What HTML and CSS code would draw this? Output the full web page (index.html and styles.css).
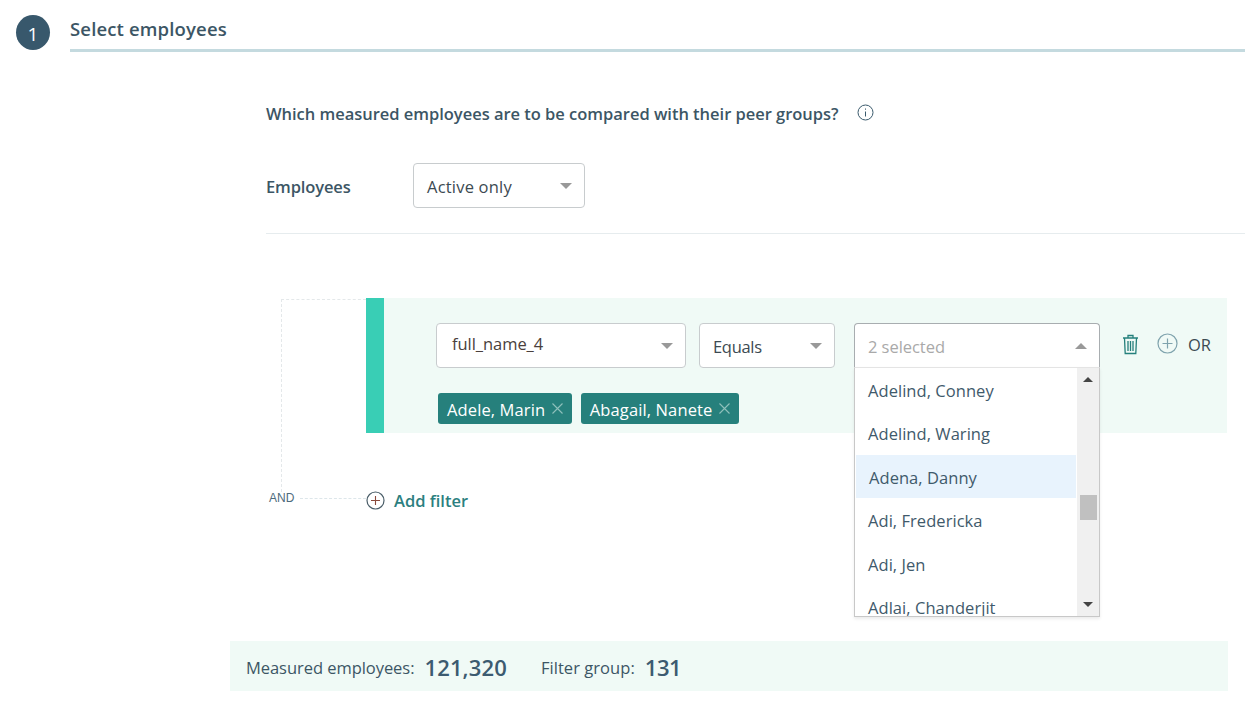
FILE: index.html
```html
<!DOCTYPE html>
<html lang="en">
<head>
<meta charset="utf-8">
<title>Select employees</title>
<link rel="stylesheet" href="styles.css">
</head>
<body>
<header class="step">
  <div class="step-num">1</div>
  <h1 class="step-title">Select employees</h1>
</header>
<section class="intro">
  <div class="question">
    <span>Which measured employees are to be compared with their peer groups?</span>
    <svg class="info" viewBox="0 0 17 17" width="17" height="17"><circle cx="8.5" cy="8.5" r="7.5" fill="none" stroke="#3a5a6c" stroke-width="1"/><path d="M8.5 7.5v5M8.5 4.500v1.200" stroke="#3a5a6c" stroke-width="1" fill="none"/></svg>
  </div>
  <div class="emp-row">
    <label class="emp-label">Employees</label>
    <div class="select select-active"><span class="txt-active">Active only</span><i class="caret"></i></div>
  </div>
</section>
<section class="filters">
  <div class="tree-v"></div>
  <div class="tree-h-top"></div>
  <div class="tree-h-bot"></div>
  <span class="and">AND</span>
  <div class="panel">
    <div class="panel-bar"></div>
    <div class="panel-body">
      <div class="controls">
        <div class="select select-field"><span class="field-text">full_name_4</span><i class="caret"></i></div>
        <div class="select select-op"><span class="txt-op">Equals</span><i class="caret"></i></div>
        <div class="multi">
          <div class="select select-multi"><span class="placeholder">2 selected</span><i class="caret caret-up"></i></div>
          <div class="dropdown">
            <ul class="options">
              <li>Adelind, Conney</li>
              <li>Adelind, Waring</li>
              <li class="hover">Adena, Danny</li>
              <li>Adi, Fredericka</li>
              <li>Adi, Jen</li>
              <li>Adlai, Chanderjit</li>
            </ul>
            <div class="scrollbar">
              <i class="sb-up"></i>
              <i class="sb-thumb"></i>
              <i class="sb-down"></i>
            </div>
          </div>
        </div>
        <svg class="trash" viewBox="0 0 17 21" width="17" height="21"><path d="M1 4h15M6 4V1.500h5V4M2.500 4l.7 15.500h10.600L14.500 4" fill="none" stroke="#25807c" stroke-width="1.300"/><path d="M6 7v10M8.500 7v10M11 7v10" stroke="#25807c" stroke-width="1.300" fill="none"/></svg>
        <svg class="plus plus-or" viewBox="0 0 21 21" width="21" height="21"><circle cx="10.500" cy="10.500" r="9.500" fill="none" stroke="#7fa3ad" stroke-width="1.200"/><path d="M10.500 5.500v10M5.500 10.500h10" stroke="#7fa3ad" stroke-width="1.200" fill="none"/></svg>
        <span class="or">OR</span>
      </div>
      <div class="tags">
        <span class="tag"><span class="tag-text">Adele, Marin</span><svg viewBox="0 0 11 11" width="11" height="11"><path d="M.5.5l10 10M10.500.5l-10 10" stroke="#8fc0bc" stroke-width="1.100" fill="none"/></svg></span>
        <span class="tag"><span class="tag-text">Abagail, Nanete</span><svg viewBox="0 0 11 11" width="11" height="11"><path d="M.5.5l10 10M10.500.5l-10 10" stroke="#8fc0bc" stroke-width="1.100" fill="none"/></svg></span>
      </div>
    </div>
  </div>
  <div class="add-filter">
    <svg viewBox="0 0 19 19" width="19" height="19"><circle cx="9.500" cy="9.500" r="8.500" fill="none" stroke="#4a5d68" stroke-width="1.200"/><path d="M9.500 5v9M5 9.500h9" stroke="#8a4a3c" stroke-width="1.100" fill="none"/></svg>
    <span class="add-text">Add filter</span>
  </div>
</section>
<footer class="summary">
  <span class="sum-label">Measured employees:</span><strong class="sum-val">121,320</strong>
  <span class="sum-label sum-second">Filter group:</span><strong class="sum-val sum-val-tight">131</strong>
</footer>
</body>
</html>
```
FILE: styles.css
```css
* { box-sizing: border-box; }
html, body { margin: 0; padding: 0; background: #fff; }
body {
  width: 1245px;
  height: 714px;
  overflow: hidden;
  font-family: "Open Sans", "Noto Sans", sans-serif;
  color: #3c5665;
  font-size: 16px;
}
.step { display: flex; padding: 15px 0 0 16px; height: 52px; }
.step-num {
  width: 34px; height: 35px; border-radius: 50%;
  background: #38586c; color: #fff;
  display: flex; align-items: center; justify-content: center;
  font-size: 19px; padding-top: 2px;
}
.step-title {
  flex: 1; margin: 0 0 0 20px; height: 37px;
  border-bottom: 3px solid #c4dadf;
  font-size: 18.500px; font-weight: 600; line-height: 28px;
  letter-spacing: 0.15px; color: #3c5665;
}
.intro { margin-left: 266px; height: 182px; border-bottom: 1px solid #e6ecee; }
.question {
  display: flex; align-items: center; gap: 18px; padding-top: 49px; height: 75px;
  font-size: 16.500px; font-weight: 600; letter-spacing: -0.025px;
}
.question span { line-height: 26px; }
.info { margin-top: -3px; }
.emp-row { display: flex; align-items: center; margin-top: 36px; }
.emp-label { width: 147px; padding-top: 2px; font-size: 16.500px; font-weight: 600; letter-spacing: -0.13px; }
.select {
  position: relative; background: #fff;
  border: 1px solid #c8ccce; border-radius: 4px;
  display: flex; align-items: center;
  font-size: 16.500px; letter-spacing: 0; color: #3c4a52;
}
.select-active { width: 172px; height: 45px; padding: 2px 0 0 13px; }
.txt-active { letter-spacing: 0.2px; }
.txt-op { letter-spacing: -0.3px; }
.caret {
  position: absolute; right: 12.500px; top: 50%; margin-top: -3px;
  width: 0; height: 0;
  border-left: 6.500px solid transparent; border-right: 6.500px solid transparent;
  border-top: 6.500px solid #999;
}
.caret-up { border-top: 0; border-bottom: 6.500px solid #999; }
.filters { position: relative; height: 407px; }
.tree-v { position: absolute; left: 281px; top: 65px; height: 193px; border-left: 1px dashed #e4e8ea; }
.tree-h-top { position: absolute; left: 281px; top: 65px; width: 85px; border-top: 1px dashed #e4e8ea; }
.tree-h-bot { position: absolute; left: 300px; top: 264px; width: 66px; border-top: 1px dashed #dde6ea; }
.and { position: absolute; left: 269px; top: 256px; font-size: 12px; line-height: 16px; color: #4d6b7c; font-family: "Liberation Sans", sans-serif; }
.panel {
  position: absolute; left: 366px; top: 64px; width: 861px; height: 135px;
  display: flex; background: #f0faf6;
}
.panel-bar { width: 18px; background: #39ceb5; }
.panel-body { flex: 1; padding: 25px 0 0 52px; }
.controls { display: flex; align-items: flex-start; height: 70px; }
.select-field { width: 250px; height: 45px; padding: 0 0 4px 15px; letter-spacing: -0.05px; }
.select-op { width: 136px; height: 45px; margin-left: 13px; padding: 2px 0 0 13px; }
.field-text { color: #4a3f3c; }
.multi { position: relative; width: 246px; margin-left: 19px; }
.select-multi { height: 45px; width: 246px; padding: 2px 0 0 13px; letter-spacing: -0.05px; border-color: #a8adb0; border-bottom-color: #e0e0e0; border-radius: 4px 4px 0 0; }
.placeholder { color: #a9a9a9; }
.dropdown {
  position: absolute; left: 0; top: 44px; z-index: 5; width: 246px; height: 250px;
  background: #fff; border: 1px solid #c8c8c8; border-top-color: #e4e4e4;
  box-shadow: 0 2px 3px rgba(0,0,0,.08);
  display: flex; overflow: hidden;
}
.options { list-style: none; margin: 0; padding: 0; flex: 1; }
.options li {
  height: 43.400px; line-height: 45px; padding-left: 13px;
  font-size: 16.500px; letter-spacing: 0.05px; color: #3f5a6b;
}
.options li.hover { background: #e8f3fd; padding-left: 13px; margin: 0 1px 0 1px; }
.scrollbar { position: relative; width: 22px; background: #f0f0f0; }
.sb-up, .sb-down { position: absolute; left: 6px; width: 0; height: 0; border-left: 5px solid transparent; border-right: 5px solid transparent; }
.sb-up { top: 9px; border-bottom: 5px solid #444; }
.sb-down { bottom: 9px; border-top: 5px solid #444; }
.sb-thumb { position: absolute; left: 3px; top: 127px; width: 17px; height: 25px; background: #c0c0c0; }
.trash { margin: 11px 0 0 22px; }
.plus-or { margin: 10px 0 0 18px; }
.or { margin: 10px 0 0 10px; font-size: 16.500px; letter-spacing: 0; line-height: 24px; color: #3c4a52; }
.tags { display: flex; gap: 9px; padding-left: 2px; }
.tag {
  display: flex; align-items: center; gap: 7px; height: 31px; padding: 0 8.500px 0 9px;
  background: #26807c; color: #fff; border-radius: 3px;
  font-size: 16.500px; letter-spacing: 0.12px;
}
.tag-text { padding-top: 1px; }
.add-filter {
  position: absolute; left: 366px; top: 254px; display: flex; align-items: center; gap: 9px;
  font-size: 16.500px; font-weight: 600; letter-spacing: 0; color: #2c7f80; line-height: 24px;
}
.add-text { padding-top: 1px; }
.summary {
  margin: 0 17px 0 230px; height: 50px; background: #f0faf6;
  display: flex; align-items: center; padding: 2px 0 0 16px;
}
.sum-label { font-size: 16.500px; letter-spacing: -0.05px; }
.sum-second { margin-left: 34px; letter-spacing: 0.05px; }
.sum-val { font-size: 22px; font-weight: 600; margin-left: 10px; letter-spacing: 0.15px; color: #3c5b70; }
.sum-val-tight { letter-spacing: -0.5px; }
```
